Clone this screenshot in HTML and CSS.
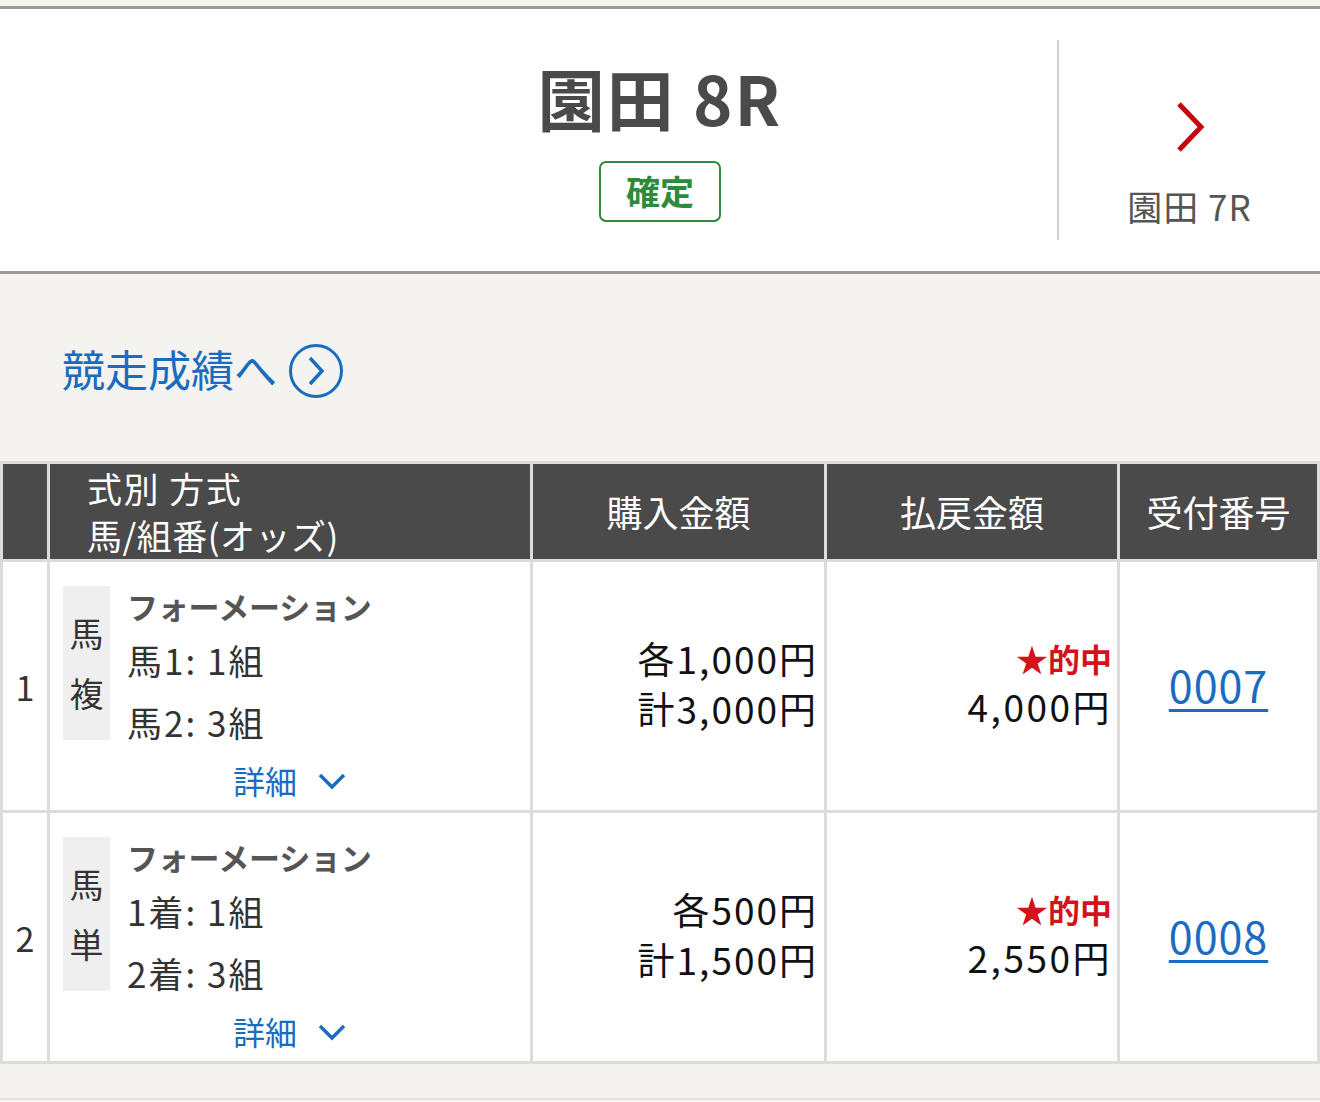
FILE: index.html
```html
<!DOCTYPE html>
<html lang="ja">
<head>
<meta charset="utf-8">
<title>園田 8R</title>
<link rel="stylesheet" href="styles.css">
</head>
<body>
<div class="topbar"></div>
<header class="race-header">
  <div class="side"></div>
  <div class="center">
    <h1 class="title">園田 8R</h1>
    <span class="badge">確定</span>
  </div>
  <a class="next" href="#">
    <svg class="next-icon" width="32" height="52" viewBox="0 0 32 52"><path d="M5 3 L27 26 L5 49" fill="none" stroke="#c4070f" stroke-width="5" stroke-linejoin="miter"/></svg>
    <span class="next-label">園田 7R</span>
  </a>
</header>
<section class="links">
  <a class="result-link" href="#">競走成績へ
    <svg class="circle-icon" width="56" height="56" viewBox="0 0 56 56"><circle cx="28" cy="28" r="25.5" fill="none" stroke="#1a6cc0" stroke-width="3"/><path d="M22 15 L34 28 L22 41" fill="none" stroke="#1a6cc0" stroke-width="3.5"/></svg>
  </a>
</section>
<table class="bets">
  <thead>
    <tr>
      <th class="c-no"></th>
      <th class="c-type"><div>式別 方式</div><div>馬/組番(オッズ)</div></th>
      <th class="c-buy">購入金額</th>
      <th class="c-pay">払戻金額</th>
      <th class="c-rcpt">受付番号</th>
    </tr>
  </thead>
  <tbody>
    <tr>
      <td class="c-no">1</td>
      <td class="c-type">
        <div class="bet">
          <div class="kind">馬<br>複</div>
          <div class="lines">
            <div class="method">フォーメーション</div>
            <div class="l1">馬1: 1組</div>
            <div class="l2">馬2: 3組</div>
          </div>
        </div>
        <div class="detail">詳細<svg class="chev" width="30" height="20" viewBox="0 0 30 20"><path d="M3 4 L15 16 L27 4" fill="none" stroke="#1a6cc0" stroke-width="3.5"/></svg></div>
      </td>
      <td class="c-buy"><div>各1,000円</div><div>計3,000円</div></td>
      <td class="c-pay"><div class="hit">★的中</div><div>4,000円</div></td>
      <td class="c-rcpt"><a href="#">0007</a></td>
    </tr>
    <tr>
      <td class="c-no">2</td>
      <td class="c-type">
        <div class="bet">
          <div class="kind">馬<br>単</div>
          <div class="lines">
            <div class="method">フォーメーション</div>
            <div class="l1">1着: 1組</div>
            <div class="l2">2着: 3組</div>
          </div>
        </div>
        <div class="detail">詳細<svg class="chev" width="30" height="20" viewBox="0 0 30 20"><path d="M3 4 L15 16 L27 4" fill="none" stroke="#1a6cc0" stroke-width="3.5"/></svg></div>
      </td>
      <td class="c-buy"><div>各500円</div><div>計1,500円</div></td>
      <td class="c-pay"><div class="hit">★的中</div><div>2,550円</div></td>
      <td class="c-rcpt"><a href="#">0008</a></td>
    </tr>
  </tbody>
</table>
<div class="foot"></div>
</body>
</html>
```
FILE: styles.css
```css
* { box-sizing: border-box; }
html, body {
  margin: 0;
  padding: 0;
  background: #f4f3f0;
  font-family: "Noto Sans CJK JP", "Noto Sans", sans-serif;
  color: #333;
}
a { text-decoration: none; }

.topbar {
  height: 9px;
  border-bottom: 3px solid #9a9a9a;
  background: #f4f3f0;
}

.race-header {
  display: grid;
  grid-template-columns: 263px 1fr 263px;
  height: 265px;
  background: #fff;
  border-bottom: 3px solid #9a9a9a;
}
.center {
  display: flex;
  flex-direction: column;
  align-items: center;
  padding-top: 49px;
}
.title {
  margin: 0;
  font-size: 67px;
  line-height: 78px;
  font-weight: 700;
  color: #4a4a4a;
  letter-spacing: 2px;
}
.badge {
  margin-top: 25px;
  width: 122px;
  height: 61px;
  border: 2px solid #2f8a3c;
  border-radius: 7px;
  color: #2f8a3c;
  font-size: 34px;
  font-weight: 700;
  line-height: 55px;
  text-align: center;
}
.next {
  align-self: center;
  height: 200px;
  border-left: 2px solid #cfcfcf;
  display: flex;
  flex-direction: column;
  align-items: center;
  padding-top: 61px;
  color: #555;
}
.next-icon { display: block; }
.next-label {
  margin-top: 33px;
  font-size: 35px;
  line-height: 40px;
  color: #555;
  letter-spacing: 1px;
}

.links {
  height: 187px;
  display: flex;
  align-items: center;
  padding-left: 62px;
}
.result-link {
  display: flex;
  align-items: center;
  color: #1a6cc0;
  font-size: 43px;
  line-height: 56px;
}
.circle-icon {
  margin-left: 11px;
  margin-top: 6px;
}

.bets {
  width: 1320px;
  border-collapse: separate;
  border-spacing: 3px;
  background: #dcdcdc;
  table-layout: fixed;
}
.bets th, .bets td { padding: 0; }
.bets th {
  background: #4a4a4a;
  color: #fff;
  font-weight: 400;
  font-size: 36px;
  height: 95px;
  line-height: 47px;
}
.bets td {
  background: #fff;
  height: 248px;
  vertical-align: middle;
}
.bets .c-no { width: 44px; text-align: center; font-size: 34px; color: #333; }
.bets .c-type { width: 480px; }
.bets .c-buy { width: 291px; }
.bets .c-pay { width: 290px; }
.bets .c-rcpt { width: 197px; }
.bets th.c-type { text-align: left; padding-left: 37px; padding-bottom: 1px; letter-spacing: 0.5px; font-size: 35px; }
.bets th.c-type div:first-child { letter-spacing: 1.5px; }

.bets td.c-type { vertical-align: top; padding: 22px 0 0 13px; }
.bet { display: flex; align-items: flex-start; }
.kind {
  margin-top: 2px;
  width: 47px;
  height: 154px;
  background: #efefef;
  font-size: 34px;
  line-height: 60px;
  text-align: center;
  color: #333;
  padding-top: 17px;
}
.lines { margin-left: 17px; }
.method {
  font-size: 31px;
  font-weight: 700;
  color: #555;
  line-height: 44px;
  letter-spacing: -0.2px;
}
.l1, .l2 { font-size: 35px; color: #333; letter-spacing: 2px; }
.l1 { line-height: 64px; }
.l2 { line-height: 60px; }
.detail {
  margin-left: -13px;
  display: flex;
  justify-content: center;
  align-items: center;
  color: #1a6cc0;
  font-size: 32px;
  line-height: 56px;
}
.chev { margin-left: 20px; margin-top: 2px; }

.bets td.c-buy {
  text-align: right;
  padding-right: 8px;
  padding-bottom: 6px;
  font-size: 37px;
  line-height: 50px;
  color: #111;
  letter-spacing: 2px;
}
.bets td.c-pay {
  text-align: right;
  padding-right: 7px;
  padding-bottom: 8px;
  font-size: 37px;
  line-height: 48px;
  color: #111;
  letter-spacing: 2.5px;
}
.bets td.c-buy div, .bets td.c-pay div { margin-right: -2px; }
.hit { color: #d3121c; font-weight: 700; font-size: 32px; letter-spacing: 0; }
.bets td.c-rcpt { text-align: center; padding-bottom: 4px; }
.c-rcpt a {
  color: #1a6cc0;
  font-size: 43px;
  text-decoration: underline;
  text-decoration-thickness: 3px;
  text-underline-offset: 6px;
  letter-spacing: 1px;
}
.foot {
  height: 36px;
  border-bottom: 2px solid #e4e4e4;
}
```
